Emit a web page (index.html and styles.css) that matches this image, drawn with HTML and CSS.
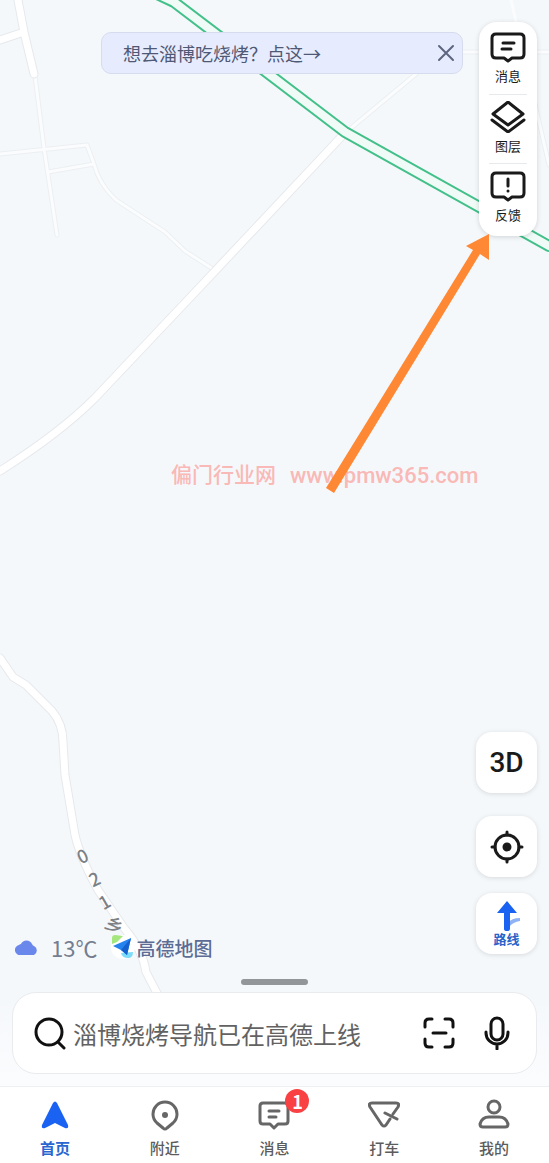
FILE: index.html
```html
<!DOCTYPE html>
<html lang="zh-CN">
<head>
  <meta charset="UTF-8" />
  <meta name="viewport" content="width=device-width, initial-scale=1.0"/>
  <title>高德地图</title>
  <link rel="stylesheet" href="styles.css">
</head>
<body>
  <svg class="map" viewBox="0 0 549 1163" preserveAspectRatio="xMidYMin slice">
    <!-- small lanes -->
    <g class="lane-edge">
      <path d="M35 76L44 148L57 235M0 154L87 145L94 164L48 172M94 164Q99 184 116 200L165 232L185 251L216 271M345 133L416 74M463 52H549M534 100L549 165"/>
    </g>
    <g class="lane">
      <path d="M35 76L44 148L57 235M0 154L87 145L94 164L48 172M94 164Q99 184 116 200L165 232L185 251L216 271M345 133L416 74M463 52H549M534 100L549 165M511 0L516 22"/>
    </g>
    <!-- roads -->
    <g class="road-edge">
      <path d="M18 0L24 32L34 74M0 40L24 32M342 136L200 287L95 398Q60 433 0 471"/>
      <path d="M0 658L13 677L26 685L52 711Q63 724 63 742L65 775L75 835Q80 857 98 890L124 928Q143 950 146 972L158 995"/>
    </g>
    <g class="road">
      <path d="M18 0L24 32L34 74M0 40L24 32M342 136L200 287L95 398Q60 433 0 471"/>
      <path d="M0 658L13 677L26 685L52 711Q63 724 63 742L65 775L75 835Q80 857 98 890L124 928Q143 950 146 972L158 995"/>
    </g>
    <!-- highway -->
    <path class="highway-edge" d="M157 -6L174 2L345 132L549 246"/>
    <path class="highway" d="M157 -6L174 2L345 132L549 246"/>
    <g class="road-name">
      <text transform="translate(82 855) rotate(-25)">0</text>
      <text transform="translate(94 878) rotate(-25)">2</text>
      <text transform="translate(104 901) rotate(-30)">1</text>
      <text transform="translate(115 924) rotate(30)">乡</text>
    </g>
  </svg>

  <main class="map-area">
    <div class="top">
      <div class="notice">
        <a href="#bbq">想去淄博吃烧烤？点这→</a>
        <button class="close" aria-label="关闭">
          <svg width="18" height="18" viewBox="0 0 18 18"><path d="M2 2L16 16M16 2L2 16"/></svg>
        </button>
      </div>
      <div class="tools">
        <button>
          <svg width="36" height="32" viewBox="0 0 36 32"><path d="M6 3H30Q34 3 34 7V23Q34 27 30 27H22L18 30L14 27H6Q2 27 2 23V7Q2 3 6 3ZM13 12H24M12 18H21"/></svg>
          <span>消息</span>
        </button>
        <button>
          <svg width="36" height="32" viewBox="0 0 36 32"><path d="M18 1L33 13L18 24L3 13ZM2 19L18 31L34 19"/></svg>
          <span>图层</span>
        </button>
        <button>
          <svg width="36" height="32" viewBox="0 0 36 32"><path d="M6 3H30Q34 3 34 7V23Q34 27 30 27H22L18 30L14 27H6Q2 27 2 23V7Q2 3 6 3ZM18 9V16M18 21V21.1"/></svg>
          <span>反馈</span>
        </button>
      </div>
    </div>

    <div class="bottom">
      <div class="status">
        <svg class="cloud" width="24" height="18" viewBox="0 0 24 18"><path d="M6 17A5 5 0 0 1 4 7Q5 6 6 6A6 6 0 0 1 17 6Q18 8 19 8A5 5 0 0 1 19 17Z"/></svg>
        <span class="temp">13℃</span>
        <svg class="brand-icon" width="25" height="24" viewBox="0 0 25 24">
          <circle cx="12" cy="12" r="12" fill="#fff"/>
          <path d="M1 9V3Q1 0 4 0L12 1L6 7Z" fill="#a5e67f"/>
          <path d="M10 18L22 17Q22 23 17 23Q11 23 10 18Z" fill="#7edcfb"/>
          <path d="M2 11L20 3L16 20L10 15Z" fill="#2583ef"/>
          <path d="M20 3L10 15L16 20Z" fill="#1261cf"/>
        </svg>
        <span class="brand">高德地图</span>
      </div>
      <div class="side">
        <button class="three-d">3D</button>
        <button class="locate" aria-label="定位">
          <svg width="34" height="34" viewBox="0 0 34 34"><circle cx="17" cy="17" r="12"/><path d="M17 2V5M17 29V32M2 17H5M29 17H32"/><circle class="dot" cx="17" cy="17" r="3"/></svg>
        </button>
        <button class="route">
          <svg width="28" height="30" viewBox="0 0 28 30"><path d="M16 21Q19 17 27 17V20Q20 21 16 26Z" fill="#8eb2f5"/><path d="M14 0L24 12H17V28Q17 30 14 30Q11 30 11 28V12H4Z" fill="#1a62f2"/></svg>
          <span>路线</span>
        </button>
      </div>
    </div>
    <div class="handle"></div>
  </main>

  <form class="search">
    <svg width="34" height="34" viewBox="0 0 34 34"><circle cx="16" cy="16" r="13"/><path d="M25 26L31 32"/></svg>
    <input type="text" placeholder="淄博烧烤导航已在高德上线" aria-label="搜索">
    <button type="button" aria-label="扫一扫">
      <svg width="32" height="32" viewBox="0 0 32 32"><path d="M2 10V6Q2 2 6 2H9M22 2H26Q30 2 30 6V10M30 22V26Q30 30 26 30H22M9 30H6Q2 30 2 26V22M10 16H23"/></svg>
    </button>
    <button type="button" aria-label="语音">
      <svg width="28" height="34" viewBox="0 0 28 34"><rect x="8" y="2" width="12" height="22" rx="6"/><path d="M3 16V17A11 11 0 0 0 25 17V16M14 28V33"/></svg>
    </button>
  </form>

  <nav>
    <a class="active" href="#home">
      <svg width="32" height="32" viewBox="0 0 32 32"><path d="M14 4Q16 1 18 4L29 26Q30 30 26 29L16 24L6 29Q2 30 3 26Z"/></svg>
      <span>首页</span>
    </a>
    <a href="#nearby">
      <svg width="32" height="32" viewBox="0 0 32 32"><path d="M8 24A12 12 0 1 1 24 24L18 29Q16 31 14 29Z"/><circle class="dot" cx="16" cy="16" r="3"/></svg>
      <span>附近</span>
    </a>
    <a href="#message">
      <svg width="32" height="32" viewBox="0 0 32 32"><path d="M5 4H27Q30 4 30 7V22Q30 25 27 25H20L16 29L12 25H5Q2 25 2 22V7Q2 4 5 4ZM11 12H21M11 18H18"/></svg>
      <span>消息</span>
      <b class="badge">1</b>
    </a>
    <a href="#taxi">
      <svg width="32" height="32" viewBox="0 0 32 32"><path d="M25 15L30 8Q32 4 28 4H4Q0 4 2 8L14 26Q16 28 18 26L22 20M17 14L29 20"/></svg>
      <span>打车</span>
    </a>
    <a href="#mine">
      <svg width="32" height="32" viewBox="0 0 32 32"><circle cx="16" cy="8" r="6"/><path d="M5 28Q2 28 2 25Q4 18 11 18H21Q28 18 30 25Q30 28 27 28Z"/></svg>
      <span>我的</span>
    </a>
  </nav>

  <svg class="marks" viewBox="0 0 549 1163" preserveAspectRatio="xMidYMin slice">
    <text x="171" y="482">偏门行业网</text>
    <text class="site" x="290" y="483">www.pmw365.com</text>
    <path d="M326 488L334 493L480 254L489 260L489 234L466 246L473 250Z"/>
  </svg>
</body>
</html>
```

FILE: styles.css
```css
* {
  box-sizing: border-box;
}
body {
  margin: 0;
  min-height: 100vh;
  position: relative;
  display: flex;
  flex-direction: column;
  font-family: "Noto Sans CJK SC", sans-serif;
  background: linear-gradient(to bottom, #f5f8fb 86%, #fbfcfe 93%);
}
button {
  border: none;
  padding: 0;
  background: none;
  font-family: inherit;
  color: #1a1a1a;
  cursor: pointer;
}
svg {
  display: block;
  flex: none;
  fill: none;
  stroke-linecap: round;
  stroke-linejoin: round;
}
a {
  color: inherit;
  text-decoration: none;
}
.map, .marks {
  position: absolute;
  top: 0;
  left: 0;
  width: 100%;
  height: 100%;
}
.marks {
  pointer-events: none;
}
.lane-edge {
  stroke: #eceff2;
  stroke-width: 5;
}
.lane {
  stroke: #fafcfd;
  stroke-width: 3;
}
.road-edge {
  stroke: #e6e9ec;
  stroke-width: 9;
}
.road {
  stroke: #fff;
  stroke-width: 7;
}
.highway-edge {
  stroke: #43c08a;
  stroke-width: 12;
}
.highway {
  stroke: #f0fbf7;
  stroke-width: 8;
}
.road-name {
  fill: #7d8085;
  font-size: 18px;
  font-weight: 500;
  text-anchor: middle;
  dominant-baseline: central;
}
.marks text {
  fill: #f9b9b6;
  font-size: 21px;
  font-weight: 500;
}
.marks .site {
  font-family: "Roboto", sans-serif;
  font-size: 22px;
}
.marks path {
  fill: #ff8834;
}
.map-area {
  position: relative;
  flex: 1;
  display: flex;
  flex-direction: column;
  padding: 22px 12px 0;
}
.top {
  display: flex;
  align-items: flex-start;
  gap: 16px;
}
.notice {
  flex: 1;
  height: 42px;
  margin: 10px 0 0 89px;
  padding: 0 7px 0 21px;
  display: flex;
  align-items: center;
  justify-content: space-between;
  background-color: #e6ecfe;
  border: 1px solid #d6dcee;
  border-radius: 10px;
  color: #4f5875;
  font-size: 18px;
}
.close {
  stroke: #5d6580;
  stroke-width: 2;
}
.tools {
  width: 58px;
  padding: 3px 10px 4px;
  background-color: #fff;
  border-radius: 18px;
  box-shadow: 0 1px 5px rgba(0,0,0,0.15);
}
.tools button {
  width: 100%;
  height: 69px;
  padding-top: 6px;
  display: flex;
  flex-direction: column;
  align-items: center;
  gap: 3px;
  font-size: 13px;
  line-height: 20px;
  stroke: #1a1a1a;
  stroke-width: 3;
}
.tools span, .side span, nav span {
  stroke: none;
}
.tools button + button {
  border-top: 1px solid #e8e9eb;
}
.bottom {
  margin-top: auto;
  display: flex;
  justify-content: space-between;
  align-items: flex-end;
}
.status {
  height: 30px;
  margin-left: 3px;
  margin-bottom: -8px;
  display: flex;
  align-items: center;
}
.cloud {
  fill: #6a88eb;
}
.temp {
  margin: 0 14px 0 12px;
  font-size: 22px;
  color: #757d90;
}
.brand {
  font-size: 19px;
  font-weight: 500;
  color: #5c6c94;
}
.side {
  display: flex;
  flex-direction: column;
  gap: 16px;
}
.side button {
  width: 61px;
  height: 61px;
  display: flex;
  flex-direction: column;
  align-items: center;
  justify-content: center;
  background-color: #fff;
  border-radius: 16px;
  box-shadow: 0 1px 5px rgba(0,0,0,0.12);
}
.side .three-d {
  margin-bottom: 7px;
  font-family: "Roboto", sans-serif;
  font-size: 28px;
  font-weight: 500;
}
.locate {
  stroke: #1a1a1a;
  stroke-width: 3;
}
.dot {
  fill: #1a1a1a;
}
.side .route {
  font-size: 13px;
  line-height: 16px;
  font-weight: 700;
  color: #2a63c8;
}
.handle {
  width: 67px;
  height: 6px;
  margin: 25px auto 7px;
  border-radius: 3px;
  background-color: #939699;
}
.search {
  position: relative;
  height: 82px;
  margin: 0 12px 12px;
  padding: 0 25px 0 20px;
  display: flex;
  align-items: center;
  background-color: #fff;
  border: 1px solid #e9ebee;
  border-radius: 24px;
  stroke: #111;
  stroke-width: 3;
}
.search input {
  flex: 1;
  min-width: 0;
  padding: 0 0 0 6px;
  border: none;
  outline: none;
  background: none;
  font-family: inherit;
  font-size: 24px;
}
.search input::placeholder {
  color: #626262;
  opacity: 1;
}
.search button {
  margin-left: 28px;
}
nav {
  position: relative;
  height: 77px;
  display: flex;
  background-color: #fff;
  border-top: 1px solid #edf0f3;
}
nav a {
  position: relative;
  flex: 1;
  padding-top: 12px;
  display: flex;
  flex-direction: column;
  align-items: center;
  font-size: 15px;
  line-height: 20px;
  font-weight: 500;
  color: #5c5c5c;
  stroke: #666;
  stroke-width: 3;
}
nav span {
  margin-top: 7px;
}
nav .dot {
  fill: #666;
  stroke: none;
}
nav .active {
  color: #2a66d0;
  stroke: none;
  font-weight: 700;
}
nav .active svg {
  fill: #1a62f2;
}
.badge {
  position: absolute;
  top: 2px;
  left: 50%;
  width: 24px;
  height: 24px;
  margin-left: 11px;
  border-radius: 50%;
  background-color: #f94144;
  color: #fff;
  font-size: 18px;
  line-height: 24px;
  text-align: center;
  stroke: none;
}
```
